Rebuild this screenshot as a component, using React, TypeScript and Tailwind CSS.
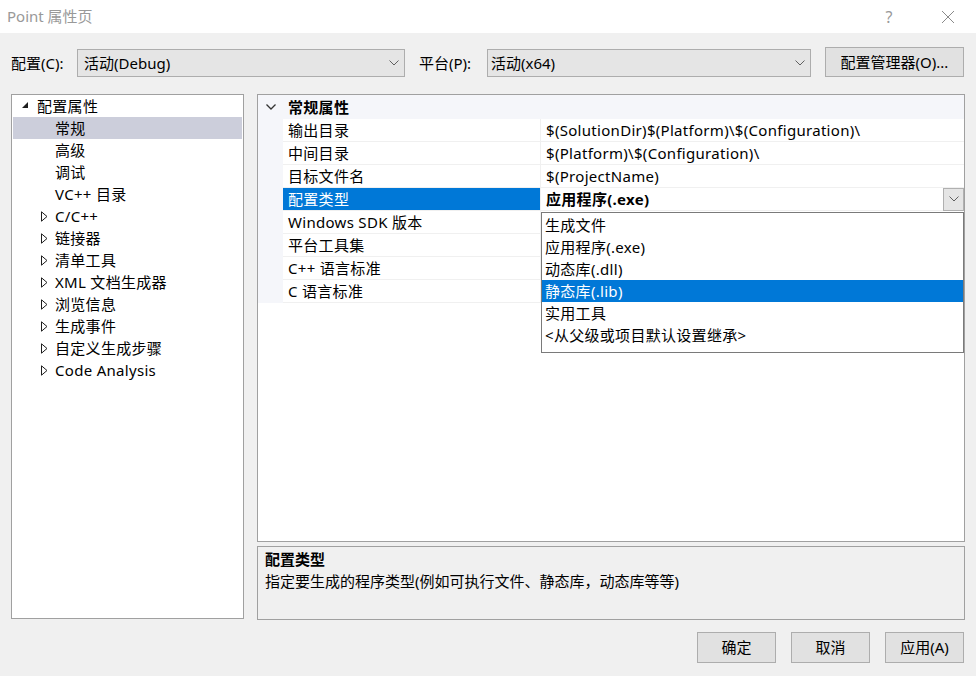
import React from "react";

const font = { fontFamily: '"Noto Sans", "Noto Sans CJK SC", sans-serif' };

function Chevron({ className = "" }: { className?: string }) {
  return (
    <svg width="10" height="6" viewBox="0 0 10 6" className={className}>
      <path d="M0.5 0.5 L5 5 L9.5 0.5" fill="none" stroke="#606060" strokeWidth="1" />
    </svg>
  );
}

function Expanded() {
  return (
    <svg width="8" height="8" viewBox="0 0 8 8">
      <path d="M7 1 L7 7 L1 7 Z" fill="#1e1e1e" />
    </svg>
  );
}

function Collapsed() {
  return (
    <svg width="7" height="11" viewBox="0 0 7 11">
      <path d="M0.5 0.8 L6 5.5 L0.5 10.2 Z" fill="none" stroke="#1e1e1e" strokeWidth="1" />
    </svg>
  );
}

const treeChildren = ["常规", "高级", "调试", "VC++ 目录"];
const treeCollapsed = ["C/C++", "链接器", "清单工具", "XML 文档生成器", "浏览信息", "生成事件", "自定义生成步骤", "Code Analysis"];

const props: [string, string][] = [
  ["输出目录", "$(SolutionDir)$(Platform)\\$(Configuration)\\"],
  ["中间目录", "$(Platform)\\$(Configuration)\\"],
  ["目标文件名", "$(ProjectName)"],
  ["配置类型", "应用程序(.exe)"],
  ["Windows SDK 版本", ""],
  ["平台工具集", ""],
  ["C++ 语言标准", ""],
  ["C 语言标准", ""],
];

const options = ["生成文件", "应用程序(.exe)", "动态库(.dll)", "静态库(.lib)", "实用工具", "<从父级或项目默认设置继承>"];

export default function App() {
  return (
    <div className="w-[976px] h-[676px] bg-[#f0f0f0] flex flex-col text-[15px] tracking-[0.3px] text-black overflow-hidden" style={font}>
      {/* Title bar */}
      <div className="h-[33px] bg-white flex items-center justify-between shrink-0">
        <span className="pl-[7px] text-[#999999] text-[15px] tracking-normal">Point 属性页</span>
        <div className="flex items-center">
          <span className="text-[#999999] text-[16px] w-[20px] text-center">?</span>
          <svg width="14" height="14" viewBox="0 0 14 14" className="ml-[42px] mr-[21px]">
            <path d="M1 1 L13 13 M13 1 L1 13" stroke="#8a8a8a" strokeWidth="1" />
          </svg>
        </div>
      </div>

      {/* Config row */}
      <div className="flex items-end mt-[14px] h-[30px] pl-[11px] shrink-0 tracking-normal">
        <span className="leading-[28px] w-[66px]">配置(C):</span>
        <div className="w-[328px] h-[28px] bg-[#e5e5e5] border border-[#adadad] flex items-center justify-between pl-[6px] pr-[5px]">
          <span>活动(Debug)</span>
          <Chevron />
        </div>
        <span className="leading-[28px] ml-[14px] w-[68px]">平台(P):</span>
        <div className="w-[324px] h-[28px] bg-[#e5e5e5] border border-[#adadad] flex items-center justify-between pl-[3px] pr-[5px]">
          <span>活动(x64)</span>
          <Chevron />
        </div>
        <div className="ml-[14px] w-[139px] h-[30px] bg-[#e1e1e1] border border-[#adadad] flex items-center justify-center">
          配置管理器(O)...
        </div>
      </div>

      {/* Main */}
      <div className="flex mt-[17px] pl-[11px] shrink-0">
        <div className="w-[233px] h-[525px] bg-white border border-[#a0a0a0] px-[1px] flex flex-col">
          <div className="h-[22px] flex items-center">
            <span className="w-[24px] flex justify-end pr-[8px] pb-[2px]"><Expanded /></span>
            <span>配置属性</span>
          </div>
          {treeChildren.map((t, i) => (
            <div key={t} className={`h-[22px] flex items-center pl-[42px] ${i === 0 ? "bg-[#cccedb]" : ""}`}>
              {t}
            </div>
          ))}
          {treeCollapsed.map((t) => (
            <div key={t} className="h-[22px] flex items-center">
              <span className="w-[42px] flex justify-end pr-[7px]"><Collapsed /></span>
              <span>{t}</span>
            </div>
          ))}
        </div>

        <div className="ml-[13px] w-[708px] flex flex-col">
          {/* Property grid */}
          <div className="h-[448px] bg-white border border-[#a0a0a0] flex flex-col relative">
            <div className="h-[24px] bg-[#f5f6fa] flex items-center">
              <span className="w-[25px] flex justify-center pl-[1px]">
                <svg width="10" height="6" viewBox="0 0 10 6">
                  <path d="M0.5 0.5 L5 5 L9.5 0.5" fill="none" stroke="#333" strokeWidth="1.3" />
                </svg>
              </span>
              <span className="font-bold pl-[5px]">常规属性</span>
            </div>
            {props.map(([k, v], i) => {
              const sel = i === 3;
              return (
                <div key={k} className="h-[23px] flex">
                  <div className="w-[25px] bg-[#f5f6fa]" />
                  <div className={`w-[257px] flex items-center pl-[5px] pt-[1px] border-b border-[#f0f0f0] ${sel ? "bg-[#0078d7] text-white border-[#0078d7]" : ""}`}>
                    {k}
                  </div>
                  <div className="w-[1px] bg-[#f0f0f0]" />
                  <div className={`flex-1 flex items-center pl-[5px] border-b border-[#f0f0f0] ${sel ? "font-bold justify-between pr-0" : "pt-[1px]"}`}>
                    <span>{v}</span>
                    {sel && (
                      <div className="w-[21px] h-[23px] bg-[#e5e5e5] border border-[#b0b0b0] flex items-center justify-center">
                        <Chevron />
                      </div>
                    )}
                  </div>
                </div>
              );
            })}
            {/* Dropdown list */}
            <div className="absolute left-[283px] top-[117px] w-[423px] h-[141px] bg-white border border-[#7a7a7a] flex flex-col pt-[1px]">
              {options.map((o, i) => (
                <div key={o} className={`h-[22px] flex items-center pl-[3px] ${i === 3 ? "bg-[#0078d7] text-white" : ""}`}>
                  {o}
                </div>
              ))}
            </div>
          </div>

          {/* Description */}
          <div className="mt-[4px] h-[74px] border border-[#a0a0a0] bg-[#f0f0f0] pl-[7px] pt-[1px] flex flex-col tracking-normal">
            <div className="h-[22px] flex items-center font-bold">配置类型</div>
            <div className="h-[23px] flex items-center">指定要生成的程序类型(例如可执行文件、静态库，动态库等等)</div>
          </div>
        </div>
      </div>

      {/* Buttons */}
      <div className="flex justify-end gap-[15px] mt-[12px] pr-[12px] tracking-normal">
        {["确定", "取消", "应用(A)"].map((b) => (
          <div key={b} className="w-[79px] h-[31px] bg-[#e1e1e1] border border-[#adadad] flex items-center justify-center">
            {b}
          </div>
        ))}
      </div>
    </div>
  );
}
